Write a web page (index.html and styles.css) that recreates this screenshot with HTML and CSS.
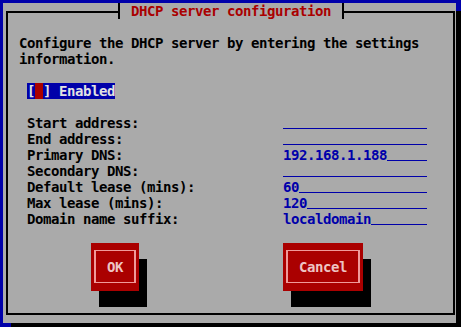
FILE: index.html
```
<!DOCTYPE html>
<html lang="en">
  <head>
    <meta charset="UTF-8" />
    <meta name="viewport" content="width=device-width, initial-scale=1.0" />
    <title>DHCP server configuration</title>
    <link rel="stylesheet" href="styles.css">
  </head>
  <body>
    <div class="screen">
      <div class="dialog">
        <div class="frame">
          <h1 class="title">DHCP server configuration</h1>
          <p class="intro">Configure the DHCP server by entering the settings information.</p>

          <div class="check"><span class="check-box">[<span class="cursor"> </span>] Enabled</span></div>

          <div class="fields">
            <div class="row">
              <span class="label">Start address:</span>
              <span class="field"><span class="value"></span><span class="fill"></span></span>
            </div>
            <div class="row">
              <span class="label">End address:</span>
              <span class="field"><span class="value"></span><span class="fill"></span></span>
            </div>
            <div class="row">
              <span class="label">Primary DNS:</span>
              <span class="field"><span class="value">192.168.1.188</span><span class="fill"></span></span>
            </div>
            <div class="row">
              <span class="label">Secondary DNS:</span>
              <span class="field"><span class="value"></span><span class="fill"></span></span>
            </div>
            <div class="row">
              <span class="label">Default lease (mins):</span>
              <span class="field"><span class="value">60</span><span class="fill"></span></span>
            </div>
            <div class="row">
              <span class="label">Max lease (mins):</span>
              <span class="field"><span class="value">120</span><span class="fill"></span></span>
            </div>
            <div class="row">
              <span class="label">Domain name suffix:</span>
              <span class="field"><span class="value">localdomain</span><span class="fill"></span></span>
            </div>
          </div>

          <div class="buttons">
            <button class="btn btn-ok"><span>OK</span></button>
            <button class="btn btn-cancel"><span>Cancel</span></button>
          </div>
        </div>
      </div>
    </div>
  </body>
</html>
```
FILE: styles.css
```
* {
  margin: 0;
  padding: 0;
  box-sizing: border-box;
}
body {
  width: 461px;
  height: 327px;
  overflow: hidden;
  background: #0000aa;
  font-family: "DejaVu Sans Mono", "Liberation Mono", monospace;
  font-weight: bold;
  font-size: 14px;
  line-height: 16px;
  letter-spacing: -0.43px;
  color: #000;
}
.screen {
  padding: 3px;
}
.dialog {
  width: 453px;
  height: 320px;
  padding: 8px 1px 8px 3px;
  background: #aaaaaa;
  box-shadow: 8px 8px 0 #000;
}
.frame {
  position: relative;
  width: 449px;
  height: 304px;
  border: 2px solid #000;
  padding: 22px 0 0 11px;
}
.title {
  position: absolute;
  left: 110px;
  top: -10px;
  height: 16px;
  padding: 0 11px;
  border-left: 2px solid #000;
  border-right: 2px solid #000;
  background: #aaaaaa;
  color: #aa0000;
  font-size: 14px;
  font-weight: bold;
  line-height: 16px;
}
.intro {
  width: 432px;
}
.check {
  margin: 16px 0 0 8px;
  height: 16px;
}
.check-box {
  white-space: pre;
  background: #0000aa;
  color: #e2e2e2;
}
.cursor {
  background: #aa0000;
}
.fields {
  margin: 16px 0 0 8px;
}
.row {
  display: flex;
  height: 16px;
}
.label {
  width: 256px;
}
.field {
  display: flex;
  width: 144px;
  color: #0000aa;
}
.fill {
  flex: 1;
  height: 14px;
  border-bottom: 1px solid #0000aa;
}
.buttons {
  display: flex;
  gap: 144px;
  margin-top: 16px;
  padding-left: 72px;
}
.btn {
  height: 48px;
  padding: 7px 3px 8px;
  border: none;
  background: #aa0000;
  box-shadow: 8px 16px 0 #000;
  font: inherit;
  letter-spacing: inherit;
  color: #eec4c4;
}
.btn span {
  display: flex;
  height: 100%;
  align-items: center;
  justify-content: center;
  border-style: solid;
  border-color: #f09a9a;
  border-width: 1px 2px;
}
.btn-ok {
  width: 48px;
}
.btn-cancel {
  width: 80px;
}
```
